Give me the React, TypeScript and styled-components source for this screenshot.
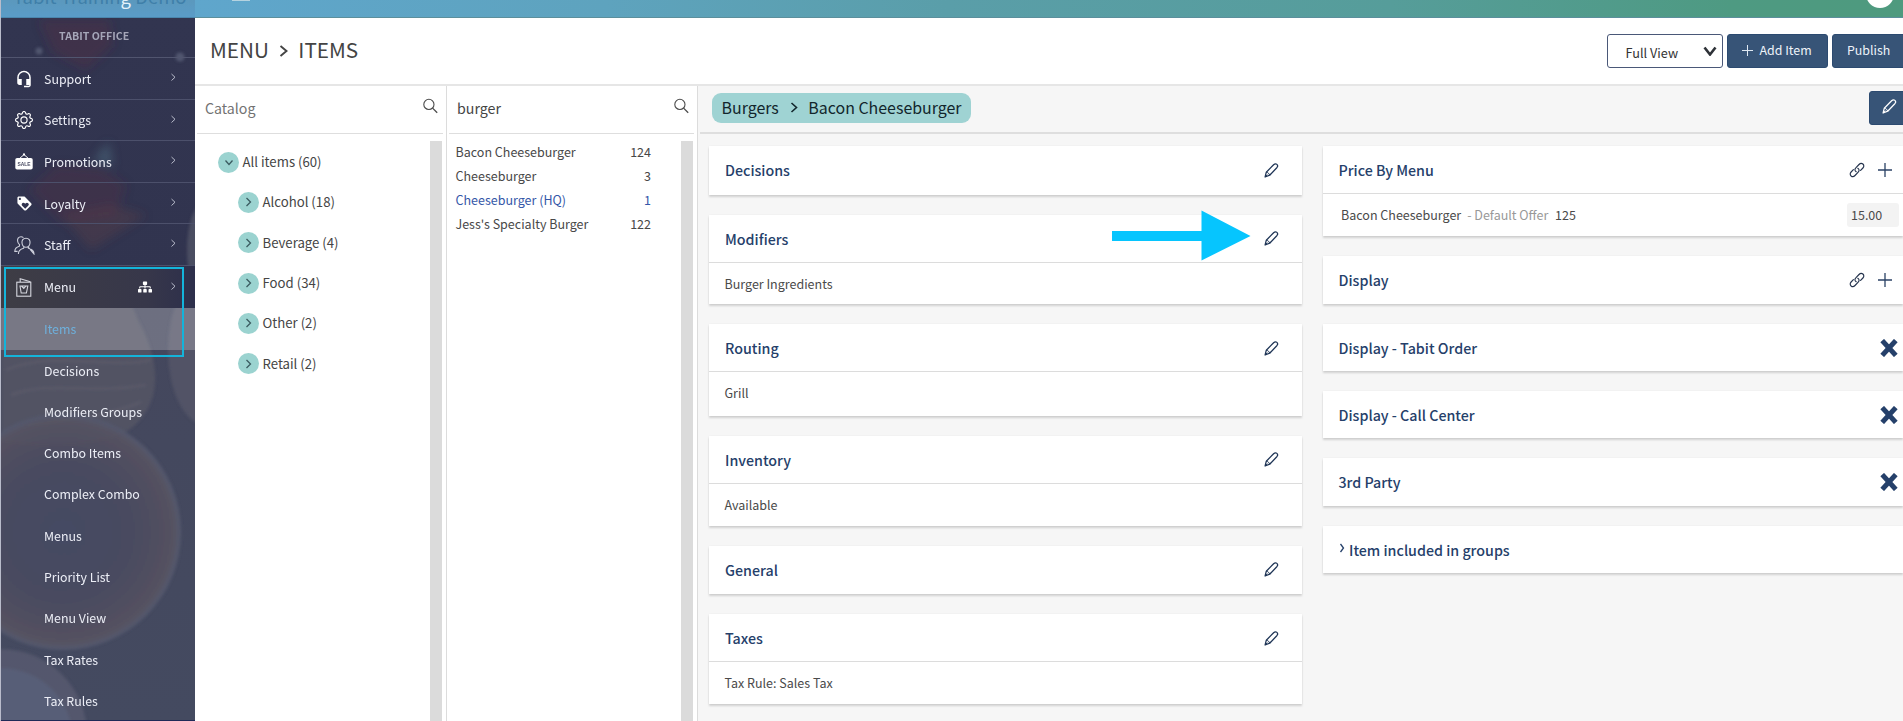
import React from 'react';
import styled, { createGlobalStyle, css } from 'styled-components';
import { MdHeadsetMic, MdLoyalty } from 'react-icons/md';
import { BsGear } from 'react-icons/bs';
import { FaSitemap } from 'react-icons/fa';

const NAVY = '#25406a';

const GlobalStyle = createGlobalStyle`
  * { box-sizing: border-box; }
  body { margin: 0; overflow: hidden; font-family: "Noto Sans CJK SC", "Noto Sans", sans-serif; color: #4a4a4a; }
`;

const Page = styled.div`
  display: flex;
  width: 1903px;
  height: 721px;
  overflow: hidden;
  background: #fff;
`;

/* ---------- sidebar ---------- */
const Sidebar = styled.aside`
  position: relative;
  flex: none;
  width: 195px;
  height: 721px;
  overflow: hidden;
  border-left: 1px solid #b9bccb;
  background: linear-gradient(#323550 0, #31344f 306px, #44475d 308px, #444a60 721px);
`;

const Backdrop = styled.svg`
  position: absolute;
  inset: 0;
`;

const Brand = styled.div`
  position: relative;
  display: flex;
  align-items: flex-end;
  height: 18px;
  padding: 0 0 11px 12px;
  overflow: hidden;
  background: linear-gradient(#5b98bd, #5a9cc8);
  border-bottom: 1px solid #4a86ad;
  color: #3f7fa9;
  font-size: 18.5px;
  line-height: 20px;
  white-space: nowrap;
  em { font-style: normal; color: #e4f2fb; }
`;

const SideHeading = styled.div`
  position: relative;
  height: 40px;
  padding-left: 58px;
  border-bottom: 1px solid #51556f;
  color: #a5a6b8;
  font-size: 10.6px;
  font-weight: 700;
  line-height: 35px;
`;

const NavRow = styled.div<{ $active?: boolean }>`
  position: relative;
  display: flex;
  align-items: center;
  height: 41.6px;
  padding: 1px 19px 0 11px;
  border-bottom: ${p => (p.$active ? 'none' : '1px solid #4c506b')};
  background: ${p => (p.$active ? 'linear-gradient(90deg, #3e3d45, #37374a 75%, #2d2f4b)' : 'transparent')};
  color: #eceef6;
  font-size: 12.4px;
`;

const NavIcon = styled.span`
  display: flex;
  justify-content: center;
  width: 24px;
  margin-right: 8px;
  color: #fff;
`;

const NavLabel = styled.span`
  flex: 1;
  line-height: 20px;
`;

const SiteIcon = styled.span`
  display: flex;
  margin-right: 18px;
  color: #fff;
`;

const NavArrow = styled.span`
  display: flex;
  margin-bottom: 3px;
`;

const SubRow = styled.div<{ $active?: boolean }>`
  position: relative;
  height: ${p => (p.$active ? '42px' : '41.3px')};
  padding-left: 43px;
  font-size: 12.4px;
  line-height: 42px;
  color: ${p => (p.$active ? '#6fb0dc' : '#eceef6')};
  background: ${p => (p.$active ? 'rgba(255,255,255,0.22)' : 'transparent')};
`;

const Marker = styled.div`
  position: absolute;
  left: 3px;
  top: 267px;
  width: 180px;
  height: 90px;
  border: 2px solid #14b4da;
`;

/* ---------- main ---------- */
const Main = styled.main`
  display: flex;
  flex-direction: column;
  flex: 1;
  min-width: 0;
`;

const TopBar = styled.div`
  display: flex;
  justify-content: space-between;
  height: 18px;
  padding: 0 9px 0 37px;
  overflow: hidden;
  background: linear-gradient(90deg, #5fa6cc 0, #5ea3be 24%, #5a9ea9 44%, #569d9a 70%, #4e9a82 90%, #4e9a7e 100%);
  border-bottom: 1px solid #5c8f9c;
`;

const Burger = styled.span`
  width: 18px;
  height: 1px;
  background: #b5d3e0;
`;

const Avatar = styled.span`
  width: 28px;
  height: 28px;
  margin-top: -20.5px;
  border-radius: 50%;
  background: #fff;
`;

const Header = styled.header`
  display: flex;
  flex: none;
  align-items: flex-start;
  height: 68px;
  padding: 16px 0 0 15.5px;
  border-bottom: 2px solid #e6e6e6;
`;

const Title = styled.h1`
  display: flex;
  flex: 1;
  align-items: center;
  margin: -1px 0 0 -0.5px;
  color: #444;
  font-size: 20.7px;
  font-weight: 400;
  line-height: 33px;
  svg { margin: 2px 10px 0 10.5px; }
`;

const ViewSelect = styled.div`
  display: flex;
  justify-content: space-between;
  width: 116px;
  height: 34px;
  margin-right: 4px;
  padding: 0 5px 0 17.5px;
  border: 1px solid #4a5878;
  border-radius: 3px;
  font-size: 12.7px;
  line-height: 35px;
  color: #333;
  svg { margin-top: 11px; }
`;

const HeaderButton = styled.button<{ $w: number; $pad: number }>`
  display: flex;
  align-items: center;
  gap: 6.5px;
  width: ${p => p.$w}px;
  height: 34px;
  margin: 0 4px 0 0;
  padding: 0 0 2px ${p => p.$pad}px;
  border: 1px solid #2c4a70;
  border-radius: 3px;
  background: #375477;
  color: #eef3f9;
  font-family: inherit;
  font-size: 12.4px;
  line-height: 18px;
  white-space: nowrap;
  &:last-child { flex: none; margin: 0 -8px 0 0; }
`;

const Body = styled.div`
  display: flex;
  flex: 1;
  min-height: 0;
`;

const Column = styled.section<{ $w: number }>`
  display: flex;
  flex: none;
  flex-direction: column;
  width: ${p => p.$w}px;
  border-right: 1px solid #dcdcdc;
`;

const SearchBox = styled.div<{ $muted?: boolean; $pl: number }>`
  display: flex;
  flex: none;
  justify-content: space-between;
  height: 48px;
  margin: 0 3px 0 2px;
  padding: 11px 5px 0 ${p => p.$pl}px;
  border-bottom: 1px solid #dedede;
  color: ${p => (p.$muted ? '#727272' : '#454545')};
  font-size: 14.2px;
  line-height: 22px;
  svg { margin-top: 1px; }
`;

const ColumnBody = styled.div`
  display: flex;
  flex: 1;
  min-height: 0;
`;

const Scroller = styled.div`
  flex: none;
  width: 12px;
  margin: 7px 4.5px 0 0;
  background: #dbdbdb;
`;

const Tree = styled.div`
  flex: 1;
  padding-top: 8px;
`;

const TreeRow = styled.div<{ $child?: boolean }>`
  display: flex;
  align-items: center;
  gap: 3.5px;
  height: 40.3px;
  padding-left: ${p => (p.$child ? 43 : 23)}px;
  font-size: 13.2px;
  line-height: 20px;
  color: #454545;
`;

const Dot = styled.span`
  display: flex;
  align-items: center;
  justify-content: center;
  width: 21px;
  height: 21px;
  border-radius: 50%;
  background: #9bd3d0;
`;

const ItemList = styled.div`
  flex: 1;
  padding: 5.5px 29.5px 0 8.5px;
`;

const ItemRow = styled.div<{ $hq?: boolean }>`
  display: flex;
  justify-content: space-between;
  height: 24.1px;
  font-size: 12.5px;
  line-height: 24px;
  color: ${p => (p.$hq ? '#3557a8' : '#484848')};
`;

const Detail = styled.section`
  flex: 1;
  min-width: 0;
  padding-left: 2px;
  background: #f6f6f6;
`;

const DetailHead = styled.div`
  display: flex;
  align-items: flex-start;
  justify-content: space-between;
  height: 48px;
  padding: 7px 0 0 12px;
  border-bottom: 2px solid #dedede;
`;

const Pill = styled.div`
  display: flex;
  align-items: center;
  height: 30px;
  padding: 0 9.5px;
  border-radius: 9px;
  background: #9fd3d3;
  color: #12262c;
  font-size: 15.95px;
  line-height: 28px;
  padding-bottom: 2px;
  svg { margin: 1px 10.5px 0 11px; }
`;

const EditButton = styled.button`
  display: flex;
  width: 42px;
  height: 34px;
  margin: -2px -8px 0 0;
  padding: 7px 0 0 12px;
  border: 1px solid #2c4a70;
  border-radius: 3px;
  background: #375477;
  color: #fff;
`;

const Cards = styled.div`
  display: flex;
  align-items: flex-start;
  gap: 20.5px;
  padding: 12px 0 0 9px;
`;

const CardColumn = styled.div<{ $w: number }>`
  display: flex;
  flex: none;
  flex-direction: column;
  gap: 20px;
  width: ${p => p.$w}px;
`;

const Card = styled.article<{ $h: number }>`
  height: ${p => p.$h}px;
  background: #fff;
  box-shadow: 0 2px 2px rgba(0, 0, 0, 0.15), 0 0 2px rgba(0, 0, 0, 0.05);
`;

const CardHead = styled.div<{ $line?: boolean; $pr: number }>`
  display: flex;
  align-items: flex-start;
  height: 48px;
  padding: 12px ${p => p.$pr}px 0 16px;
  color: ${NAVY};
  font-size: 14.25px;
  font-weight: 500;
  line-height: 23px;
  ${p => p.$line && css`border-bottom: 1px solid #dcdcdc;`}
  svg { flex: none; }
`;

const CardTitle = styled.span`
  display: flex;
  flex: 1;
  gap: 4.5px;
  svg { margin-top: 5px; }
`;

const Tools = styled.span`
  display: flex;
  align-items: center;
  gap: 13px;
  height: 24px;
`;

const CardText = styled.div`
  padding-left: 15.5px;
  font-size: 12.5px;
  line-height: 41px;
`;

const PriceRow = styled.div`
  display: flex;
  align-items: flex-start;
  padding: 9px 4px 0 18.5px;
  font-size: 12.5px;
  line-height: 24px;
`;

const Offer = styled.span`
  flex: 1;
  margin-left: 6px;
  color: #999;
  b { margin-left: 4px; color: #4a4a4a; font-weight: 400; }
`;

const Price = styled.span`
  width: 52px;
  height: 24px;
  padding-left: 4.5px;
  border-radius: 3px;
  background: #f3f3f3;
`;

const Pointer = styled.svg`
  position: absolute;
  left: 1112px;
  top: 210px;
`;

/* ---------- icons ---------- */
const Chevron = ({ w = 5, h = 8, sw = 1.3, color = 'currentColor' }: { w?: number; h?: number; sw?: number; color?: string }) => (
  <svg width={w + 2} height={h + 2} viewBox={`-1 -1 ${w + 2} ${h + 2}`} fill="none" stroke={color} strokeWidth={sw}>
    <path d={`M0.5 0L${w - 0.5} ${h / 2}L0.5 ${h}`} />
  </svg>
);

const ChevronDown = ({ w, h, sw, color }: { w: number; h: number; sw: number; color: string }) => (
  <svg width={w + 2} height={h + 2} viewBox={`-1 -1 ${w + 2} ${h + 2}`} fill="none" stroke={color} strokeWidth={sw}>
    <path d={`M0.5 0.5L${w / 2} ${h - 0.5}L${w - 0.5} 0.5`} />
  </svg>
);

const SearchIcon = () => (
  <svg width="16" height="16" viewBox="0 0 16 16" fill="none" stroke="#4a4a4a" strokeWidth="1.1">
    <circle cx="6.9" cy="6.4" r="5.1" />
    <path d="M10.6 10.1L15.2 14.7" strokeWidth="1.3" />
  </svg>
);

const Pencil = ({ color = '#1f3556' }: { color?: string }) => (
  <svg width="15" height="15" viewBox="0 0 15 15" fill="none" stroke={color} strokeWidth="1.25" strokeLinejoin="round">
    <path d="M1.1 14L2.3 9.2L9.6 1.8C10.6 .8 12 .6 12.900 1.400C13.900 2.300 13.700 3.700 12.800 4.700L5.700 12.200Z" />
    <path d="M2.300 9.200C3.900 9.400 5.300 10.600 5.700 12.200M1.100 14L3.200 11.600" strokeWidth="1" />
  </svg>
);

const LinkIcon = () => (
  <svg width="16" height="16" viewBox="0 0 16 16" fill="none" stroke="#24334d" strokeWidth="1.15" strokeLinecap="round">
    <path d="M7.200 9.700C5.700 8.900 5.500 7.200 6.800 5.900L10 2.500C11.200 1.200 12.700 1 13.900 2C15.100 3.100 15.100 4.700 13.900 6L11.600 8.400" />
    <path d="M8.800 6.300C10.300 7.100 10.500 8.800 9.200 10.100L6 13.500C4.800 14.800 3.300 15 2.100 14C.9 12.900 .9 11.300 2.100 10L4.400 7.600" />
  </svg>
);

const Plus = ({ size = 14, color = '#2b4265' }: { size?: number; color?: string }) => (
  <svg width={size} height={size} viewBox="0 0 14 14" stroke={color} strokeWidth="1.3">
    <path d="M7 0V14M0 7H14" />
  </svg>
);

const Cross = () => (
  <svg width="18" height="18" viewBox="0 0 18 18" stroke="#25406a" strokeWidth="5" strokeLinecap="butt">
    <path d="M2.2 1.6L15.8 16.4M15.8 1.6L2.2 16.4" />
  </svg>
);

const SaleIcon = () => (
  <svg width="18" height="17" viewBox="0 0 18 17">
    <path d="M4 6L9 1.6L14 6" fill="none" stroke="#fff" strokeWidth="1" />
    <circle cx="9" cy="1.4" r="1.1" fill="#fff" />
    <rect x="0.3" y="5" width="17.4" height="11.6" rx="1.8" fill="#fff" />
    <text x="9" y="12.8" textAnchor="middle" fontSize="4.9" fontWeight="700" fontFamily="Liberation Sans" fill="#4a4c63">SALE</text>
  </svg>
);

const StaffIcon = () => (
  <svg width="21" height="19" viewBox="0 0 21 19" fill="none" stroke="#cfd1dd" strokeWidth="1.1">
    <path d="M12 2.200C15 2.200 16.300 4.400 16 7C15.700 9.600 14.200 11.200 12 11.200C9.800 11.200 8.300 9.600 8 7C7.700 4.400 9 2.200 12 2.200Z" />
    <path d="M4.400 18C4.400 14.500 6 13.200 9.600 12.300L10 10.800M14 10.800L14.400 12.300C18 13.200 20 14.500 20 18Z" />
    <path d="M9.400 1.600C8.700 1 7.800 .8 7 .8C4.300 .8 3.300 2.800 3.600 5C3.800 6.800 4.500 8 5.600 8.700L5.300 10.300C2.200 11.200 .8 12.300 .8 15.400H3.600" />
  </svg>
);

const MenuIcon = () => (
  <svg width="16" height="19" viewBox="0 0 16 19" fill="none" stroke="#d6d7df" strokeWidth="1.1">
    <rect x="0.8" y="4.200" width="14" height="14" />
    <path d="M4.200 4L4.200 .8L14.400 3.800" />
    <path d="M4 8H11.800L10.400 15H5.200ZM5.500 8L7.800 10.400L10 8" />
  </svg>
);

/* ---------- data ---------- */
const NAV = [
  { label: 'Support', icon: <MdHeadsetMic size={18} /> },
  { label: 'Settings', icon: <BsGear size={18} /> },
  { label: 'Promotions', icon: <SaleIcon /> },
  { label: 'Loyalty', icon: <MdLoyalty size={17} /> },
  { label: 'Staff', icon: <StaffIcon /> },
];
const SUB = ['Decisions', 'Modifiers Groups', 'Combo Items', 'Complex Combo', 'Menus', 'Priority List', 'Menu View', 'Tax Rates', 'Tax Rules'];
const TREE = ['Alcohol (18)', 'Beverage (4)', 'Food (34)', 'Other (2)', 'Retail (2)'];
const ITEMS = [
  { name: 'Bacon Cheeseburger', count: 124 },
  { name: 'Cheeseburger', count: 3 },
  { name: 'Cheeseburger (HQ)', count: 1, hq: true },
  { name: "Jess's Specialty Burger", count: 122 },
];
const LEFT = [
  { title: 'Decisions', h: 48.5 },
  { title: 'Modifiers', text: 'Burger Ingredients', h: 89.5 },
  { title: 'Routing', text: 'Grill', h: 91.5 },
  { title: 'Inventory', text: 'Available', h: 90 },
  { title: 'General', h: 48.5 },
  { title: 'Taxes', text: 'Tax Rule: Sales Tax', h: 89.5 },
];
const OFF = ['Display - Tabit Order', 'Display - Call Center', '3rd Party'];

const SidebarBackdrop = () => (
  <Backdrop width="195" height="721" viewBox="0 0 195 721">
    <defs>
      <filter id="soft" x="-20%" y="-20%" width="140%" height="140%"><feGaussianBlur stdDeviation="5" /></filter>
      <filter id="edge" x="-20%" y="-20%" width="140%" height="140%"><feGaussianBlur stdDeviation="1.5" /></filter>
      <radialGradient id="plate">
        <stop offset="0" stopColor="#464b64" />
        <stop offset=".55" stopColor="#4a4b60" />
        <stop offset=".85" stopColor="#54505f" />
        <stop offset=".94" stopColor="#575463" />
        <stop offset="1" stopColor="#555a70" />
      </radialGradient>
    </defs>
    <g filter="url(#soft)">
      <path d="M38 20H108L112 45L85 70L52 52Z" fill="#5c2f42" opacity=".32" />
      <path d="M28 190L55 165L100 168L125 185L115 215L60 222Z" fill="#5a2f42" opacity=".3" />
      <path d="M60 215L110 205L145 215L90 250Z" fill="#6c4040" opacity=".28" />
      <path d="M92 160L108 142L112 166Z" fill="#4d7183" opacity=".5" />
    </g>
    <g filter="url(#edge)">
      <circle cx="38" cy="51" r="3.500" fill="#70788f" opacity=".5" />
      <circle cx="179" cy="57" r="4.500" fill="#70788f" opacity=".5" />
      <ellipse cx="204" cy="250" rx="18" ry="48" fill="#5f6271" opacity=".55" />
      <path d="M0 300C30 265 120 260 137 320C160 360 165 410 120 435C70 450 20 445 0 440Z" fill="#5b5a67" opacity=".6" />
      <path d="M5 370C50 350 110 370 150 360M10 395C50 380 90 395 145 385M25 425C70 420 110 415 140 402" stroke="#666372" strokeWidth="2.500" fill="none" opacity=".45" />
      <ellipse cx="205" cy="350" rx="38" ry="75" fill="#5b5c6c" opacity=".6" />
      <circle cx="62" cy="532" r="118" fill="url(#plate)" opacity=".9" />
      <circle cx="0" cy="735" r="86" fill="#575b70" opacity=".8" />
      <circle cx="0" cy="740" r="72" fill="#596079" opacity=".8" />
    </g>
    <path d="M0 720.500H195" stroke="#202a58" />
  </Backdrop>
);

export default function App() {
  return (
    <Page>
      <GlobalStyle />
      <Sidebar>
        <SidebarBackdrop />
        <Brand>Tabit Trainin<em>g</em>&nbsp;Demo</Brand>
        <SideHeading>TABIT OFFICE</SideHeading>
        {NAV.map(n => (
          <NavRow key={n.label}>
            <NavIcon>{n.icon}</NavIcon>
            <NavLabel>{n.label}</NavLabel>
            <NavArrow><Chevron w={4.5} h={6.5} sw={1} color="#b9bccb" /></NavArrow>
          </NavRow>
        ))}
        <NavRow $active>
          <NavIcon><MenuIcon /></NavIcon>
          <NavLabel>Menu</NavLabel>
          <SiteIcon><FaSitemap size={14} /></SiteIcon>
          <NavArrow><Chevron w={4.5} h={6.5} sw={1} color="#b9bccb" /></NavArrow>
        </NavRow>
        <SubRow $active>Items</SubRow>
        {SUB.map(s => <SubRow key={s}>{s}</SubRow>)}
        <Marker />
      </Sidebar>

      <Main>
        <TopBar><Burger /><Avatar /></TopBar>
        <Header>
          <Title>MENU<Chevron w={7} h={10} sw={1.9} />ITEMS</Title>
          <ViewSelect>Full View<ChevronDown w={12} h={8} sw={2.6} color="#2e3238" /></ViewSelect>
          <HeaderButton $w={101} $pad={14}><Plus size={11} color="#dfe8f2" />Add Item</HeaderButton>
          <HeaderButton $w={79} $pad={14}>Publish</HeaderButton>
        </Header>
        <Body>
          <Column $w={252}>
            <SearchBox $muted $pl={8}>Catalog<SearchIcon /></SearchBox>
            <ColumnBody>
              <Tree>
                <TreeRow><Dot><ChevronDown w={8} h={5} sw={1.3} color="#3b5b60" /></Dot>All items (60)</TreeRow>
                {TREE.map(t => (
                  <TreeRow key={t} $child><Dot><Chevron w={5} h={8} sw={1.3} color="#3b5b60" /></Dot>{t}</TreeRow>
                ))}
              </Tree>
              <Scroller />
            </ColumnBody>
          </Column>
          <Column $w={251}>
            <SearchBox $pl={8}>burger<SearchIcon /></SearchBox>
            <ColumnBody>
              <ItemList>
                {ITEMS.map(i => (
                  <ItemRow key={i.name} $hq={i.hq}><span>{i.name}</span><span>{i.count}</span></ItemRow>
                ))}
              </ItemList>
              <Scroller />
            </ColumnBody>
          </Column>
          <Detail>
            <DetailHead>
              <Pill>Burgers<Chevron w={6} h={9} sw={1.6} />Bacon Cheeseburger</Pill>
              <EditButton><Pencil color="#fff" /></EditButton>
            </DetailHead>
            <Cards>
              <CardColumn $w={593}>
                {LEFT.map(c => (
                  <Card key={c.title} $h={c.h}>
                    <CardHead $line={!!c.text} $pr={23}>
                      <CardTitle>{c.title}</CardTitle>
                      <Tools><Pencil /></Tools>
                    </CardHead>
                    {c.text && <CardText>{c.text}</CardText>}
                  </Card>
                ))}
              </CardColumn>
              <CardColumn $w={580}>
                <Card $h={90}>
                  <CardHead $line $pr={11}>
                    <CardTitle>Price By Menu</CardTitle>
                    <Tools><LinkIcon /><Plus /></Tools>
                  </CardHead>
                  <PriceRow>
                    Bacon Cheeseburger
                    <Offer>- Default Offer <b>125</b></Offer>
                    <Price>15.00</Price>
                  </PriceRow>
                </Card>
                <Card $h={48}>
                  <CardHead $pr={11}>
                    <CardTitle>Display</CardTitle>
                    <Tools><LinkIcon /><Plus /></Tools>
                  </CardHead>
                </Card>
                {OFF.map(t => (
                  <Card key={t} $h={47.2}>
                    <CardHead $pr={4.5}>
                      <CardTitle>{t}</CardTitle>
                      <Tools><Cross /></Tools>
                    </CardHead>
                  </Card>
                ))}
                <Card $h={47.2}>
                  <CardHead $pr={12}>
                    <CardTitle><Chevron w={4} h={8} sw={1.3} />Item included in groups</CardTitle>
                  </CardHead>
                </Card>
              </CardColumn>
            </Cards>
          </Detail>
        </Body>
      </Main>
      <Pointer width="139" height="52" viewBox="0 0 139 52">
        <path d="M0 21H89.500V.5L138.500 26L89.500 50.500V31H0Z" fill="#06c5fe" />
      </Pointer>
    </Page>
  );
}
